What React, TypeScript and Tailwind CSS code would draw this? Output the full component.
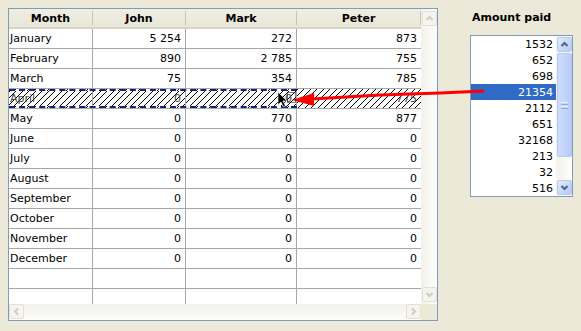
const rows: [string, string, string, string][] = [
  ["January", "5 254", "272", "873"],
  ["February", "890", "2 785", "755"],
  ["March", "75", "354", "785"],
  ["April", "0", "0", "775"],
  ["May", "0", "770", "877"],
  ["June", "0", "0", "0"],
  ["July", "0", "0", "0"],
  ["August", "0", "0", "0"],
  ["September", "0", "0", "0"],
  ["October", "0", "0", "0"],
  ["November", "0", "0", "0"],
  ["December", "0", "0", "0"],
  ["", "", "", ""],
  ["", "", "", ""],
];

const amounts = ["1532", "652", "698", "21354", "2112", "651", "32168", "213", "32", "516"];

const hatch =
  "bg-[image:repeating-linear-gradient(135deg,#000_0px,#000_0.8px,#fff_0.8px,#fff_4.6px)]";

function Chevron({ dir, color }: { dir: "up" | "down" | "left" | "right"; color: string }) {
  const d = {
    up: "M1.5 6 L4.5 3 L7.5 6",
    down: "M1.5 3 L4.5 6 L7.5 3",
    left: "M6 1.5 L3 4.5 L6 7.5",
    right: "M3 1.5 L6 4.5 L3 7.5",
  }[dir];
  return (
    <svg width="9" height="9" viewBox="0 0 9 9">
      <path d={d} fill="none" stroke={color} strokeWidth="2" />
    </svg>
  );
}

function DimButton({ dir }: { dir: "up" | "down" | "left" | "right" }) {
  return (
    <div className="w-[15px] h-[15px] rounded-[2px] border border-[#e3e1d6] bg-[#f5f4ee] flex items-center justify-center shrink-0">
      <Chevron dir={dir} color="#cfcdc2" />
    </div>
  );
}

function BlueButton({ dir }: { dir: "up" | "down" }) {
  return (
    <div className="w-[15px] h-[15px] rounded-[2px] border border-[#b6c9f7] bg-gradient-to-br from-[#e2ebfe] to-[#b5c9f6] flex items-center justify-center shrink-0">
      <Chevron dir={dir} color="#4d6185" />
    </div>
  );
}

function HeaderCell({ label, w }: { label: string; w: string }) {
  return (
    <div className={`${w} h-full flex items-center shrink-0`}>
      <div className="flex-1 text-center font-bold pt-[2px]">{label}</div>
      <div className="w-px h-[14px] bg-[#c7c5b2]" />
    </div>
  );
}

export default function App() {
  return (
    <div className="relative w-[581px] h-[331px] overflow-hidden bg-[#ece9d8] font-['DejaVu_Sans',sans-serif] text-[11px] text-black flex pt-2 pl-2">
      {/* grid panel */}
      <div className="w-[430px] h-[313px] border border-[#7f9db9] bg-white flex flex-col shrink-0">
        <div className="flex h-[295px]">
          <div className="w-[412px] h-full overflow-hidden flex flex-col">
            <div className="h-[20px] flex shrink-0 bg-gradient-to-b from-[#efeee2] to-[#e9e7d9] border-b-2 border-[#d9d5c4]">
              <HeaderCell label="Month" w="w-[84px]" />
              <HeaderCell label="John" w="w-[93px]" />
              <HeaderCell label="Mark" w="w-[111px]" />
              <HeaderCell label="Peter" w="w-[124px]" />
            </div>
            {rows.map((r, i) =>
              r[0] === "April" ? (
                <div key={i} className="h-[20px] flex shrink-0 border-b border-[#a7a7a7]">
                  <div className={`w-[288px] h-full flex border-y-2 border-dashed border-[#14207a] ${hatch}`}>
                    <div className="w-[84px] h-full border-r border-[#a7a7a7] pl-px pt-px flex items-center text-[#444]">{r[0]}</div>
                    <div className="w-[93px] h-full border-r border-[#a7a7a7] pr-[4px] pt-px flex items-center justify-end text-[#444]">{r[1]}</div>
                    <div className="w-[111px] h-full border-r border-[#a7a7a7] pr-[4px] pt-px flex items-center justify-end text-[#444]">{r[2]}</div>
                  </div>
                  <div className={`w-[124px] h-full pr-[4px] pt-px flex items-center justify-end text-[#444] ${hatch}`}>{r[3]}</div>
                </div>
              ) : (
                <div key={i} className="h-[20px] flex shrink-0 border-b border-[#a7a7a7]">
                  <div className="w-[84px] h-full border-r border-[#a7a7a7] pl-px pt-[2px] flex items-center">{r[0]}</div>
                  <div className="w-[93px] h-full border-r border-[#a7a7a7] pr-[4px] pt-[2px] flex items-center justify-end">{r[1]}</div>
                  <div className="w-[111px] h-full border-r border-[#a7a7a7] pr-[4px] pt-[2px] flex items-center justify-end">{r[2]}</div>
                  <div className="w-[124px] h-full pr-[4px] pt-[2px] flex items-center justify-end">{r[3]}</div>
                </div>
              )
            )}
          </div>
          <div className="w-[16px] h-full flex flex-col items-center justify-between py-[2px] bg-gradient-to-r from-[#f2f1eb] to-[#fdfdfb]">
            <DimButton dir="up" />
            <DimButton dir="down" />
          </div>
        </div>
        <div className="flex h-[16px]">
          <div className="w-[412px] h-full flex justify-between bg-gradient-to-b from-[#f2f1eb] to-[#fdfdfb]">
            <DimButton dir="left" />
            <DimButton dir="right" />
          </div>
          <div className="w-[16px] h-full bg-[#ece9d8]" />
        </div>
      </div>

      {/* amount list */}
      <div className="ml-[32px] flex flex-col shrink-0">
        <div className="ml-[2px] mt-[3px] leading-[14px] font-bold">Amount paid</div>
        <div className="mt-[10px] w-[103px] h-[162px] border border-[#7f9db9] bg-white flex">
          <div className="w-[85px] flex flex-col">
            {amounts.map((a, i) => (
              <div
                key={i}
                className={`h-[16px] leading-[16px] text-right pr-[3px] pt-px ${
                  a === "21354" ? "bg-[#316ac5] text-white" : ""
                }`}
              >
                {a}
              </div>
            ))}
          </div>
          <div className="w-[16px] flex flex-col items-center pt-px bg-gradient-to-r from-[#f3f2ec] to-[#fdfdfb]">
            <BlueButton dir="up" />
            <div className="mt-px w-[15px] h-[104px] rounded-[2px] border border-[#b4c8f6] bg-gradient-to-r from-[#cfdcfd] to-[#b9ccf8] flex flex-col items-center justify-center gap-px">
              <div className="w-[7px] h-px bg-[#eef3ff]" />
              <div className="w-[7px] h-px bg-[#8eaaf0]" />
              <div className="w-[7px] h-px bg-[#eef3ff]" />
              <div className="w-[7px] h-px bg-[#8eaaf0]" />
            </div>
            <div className="flex-1" />
            <div className="mb-px">
              <BlueButton dir="down" />
            </div>
          </div>
        </div>
      </div>

      {/* drag overlay: red arrow and cursor */}
      <svg className="absolute left-0 top-0 pointer-events-none" width="581" height="331" viewBox="0 0 581 331">
        <polyline points="484,91 440,93 380,95 312,99" fill="none" stroke="#ff0000" strokeWidth="3" />
        <polygon points="292,100 314,93 314,106" fill="#ff0000" />
        <rect x="287.5" y="92.5" width="8" height="10" fill="none" stroke="#000" strokeWidth="1" strokeDasharray="1 1" />
        <path d="M278 92 L278 105 L281 102 L283.5 107 L285.5 106 L283 101 L287 101 Z" fill="#000" stroke="#fff" strokeWidth="0.6" />
      </svg>
    </div>
  );
}
